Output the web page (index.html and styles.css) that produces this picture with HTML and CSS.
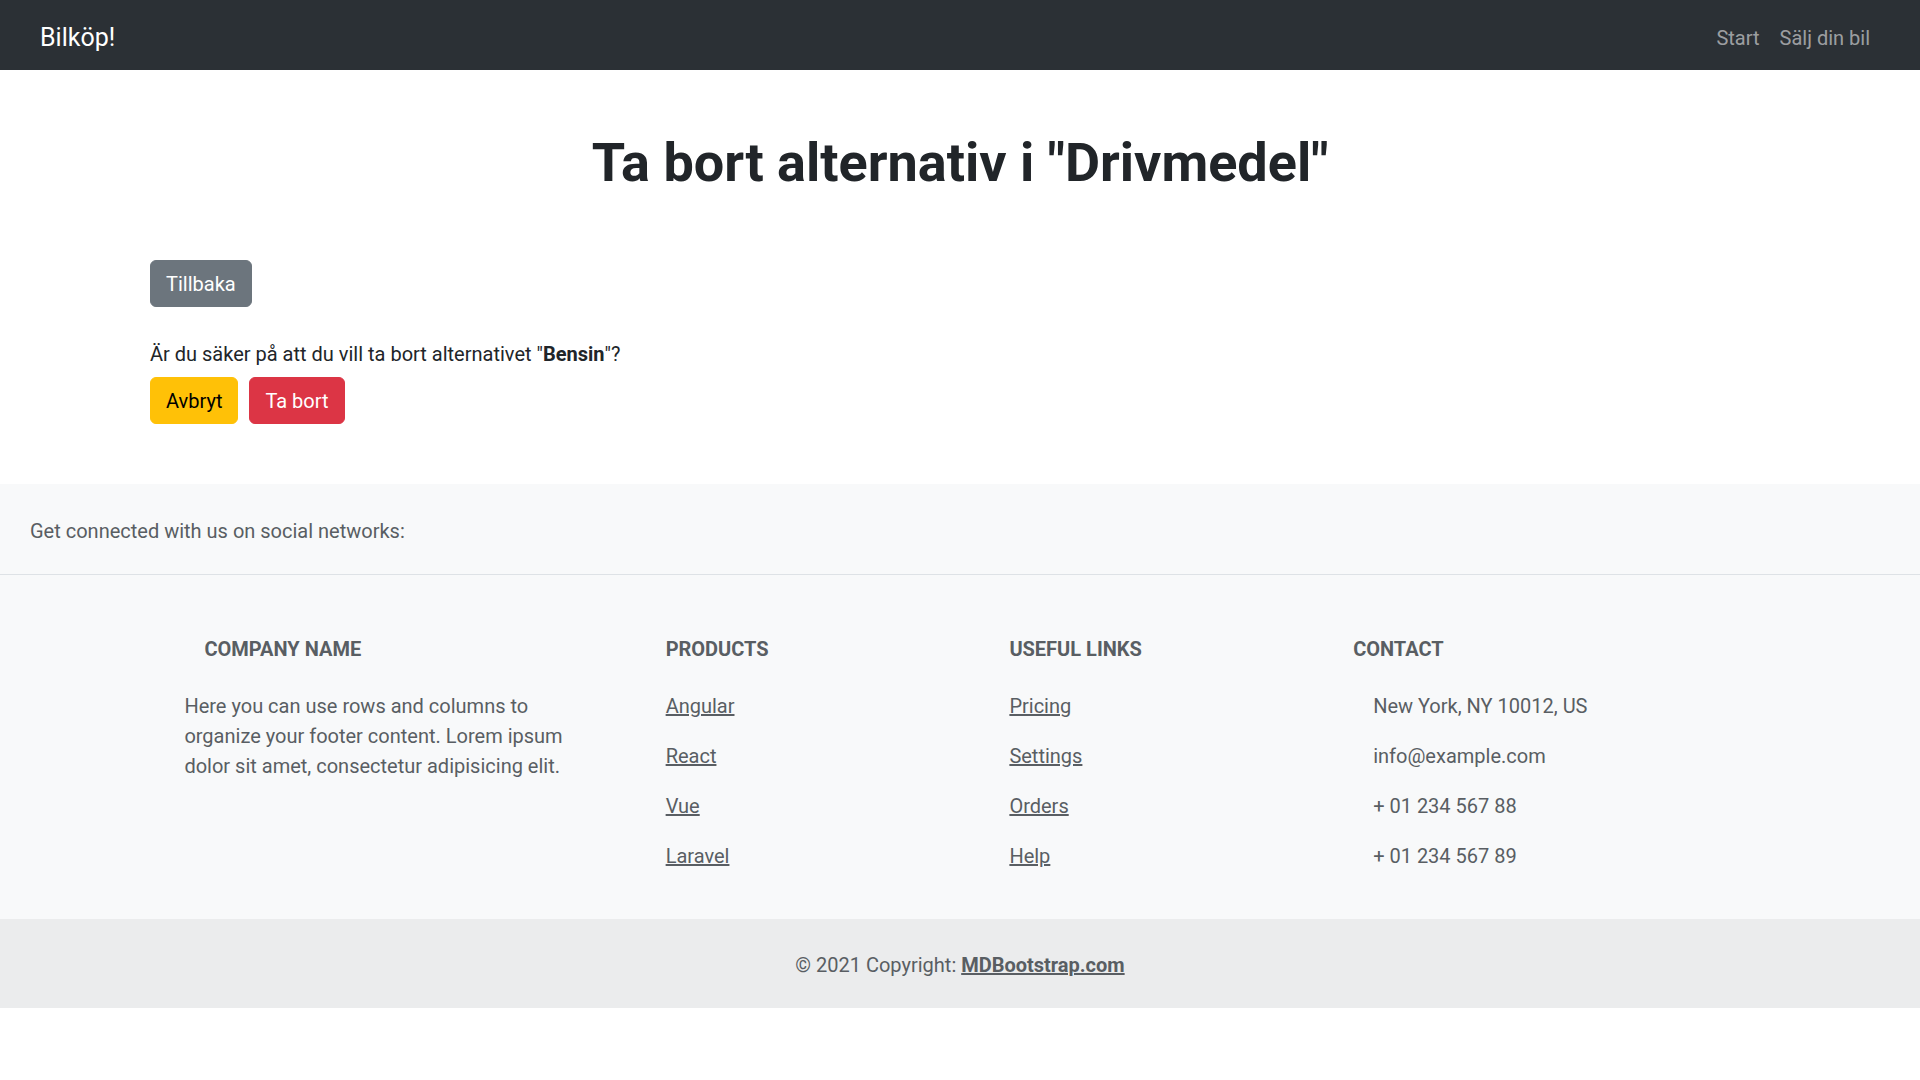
FILE: index.html
```html
<!DOCTYPE html>
<html lang="sv">
<head>
<meta charset="utf-8">
<title>Bilköp!</title>
<link rel="stylesheet" href="styles.css">
</head>
<body>
<nav class="navbar">
  <a class="brand" href="#">Bilköp!</a>
  <ul class="nav">
    <li><a class="nav-link" href="#">Start</a></li>
    <li><a class="nav-link" href="#">Sälj din bil</a></li>
  </ul>
</nav>
<main class="main">
  <h1 class="title">Ta bort alternativ i "Drivmedel"</h1>
  <div class="back-row"><a class="btn btn-secondary" href="#">Tillbaka</a></div>
  <p class="question">Är du säker på att du vill ta bort alternativet "<strong>Bensin</strong>"?</p>
  <div class="actions">
    <a class="btn btn-warning" href="#">Avbryt</a>
    <a class="btn btn-danger" href="#">Ta bort</a>
  </div>
</main>
<footer class="footer">
  <section class="social">
    <span>Get connected with us on social networks:</span>
  </section>
  <section class="footer-main">
    <div class="cols">
      <div class="col col-wide">
        <h6 class="col-title indent">Company name</h6>
        <p class="about">Here you can use rows and columns to organize your footer content. Lorem ipsum dolor sit amet, consectetur adipisicing elit.</p>
      </div>
      <div class="col col-narrow">
        <h6 class="col-title">Products</h6>
        <p><a class="link" href="#">Angular</a></p>
        <p><a class="link" href="#">React</a></p>
        <p><a class="link" href="#">Vue</a></p>
        <p><a class="link" href="#">Laravel</a></p>
      </div>
      <div class="col col-narrow">
        <h6 class="col-title">Useful links</h6>
        <p><a class="link" href="#">Pricing</a></p>
        <p><a class="link" href="#">Settings</a></p>
        <p><a class="link" href="#">Orders</a></p>
        <p><a class="link" href="#">Help</a></p>
      </div>
      <div class="col col-wide">
        <h6 class="col-title">Contact</h6>
        <p class="indent">New York, NY 10012, US</p>
        <p class="indent">info@example.com</p>
        <p class="indent">+ 01 234 567 88</p>
        <p class="indent">+ 01 234 567 89</p>
      </div>
    </div>
  </section>
  <div class="copyright">© 2021 Copyright: <a class="copy-link" href="#">MDBootstrap.com</a></div>
</footer>
</body>
</html>
```

FILE: styles.css
```css
*, *::before, *::after { box-sizing: border-box; }

html, body { margin: 0; padding: 0; }

body {
  font-family: Roboto, "Noto Sans", "Liberation Sans", sans-serif;
  font-size: 20px;
  line-height: 30px;
  color: #212529;
  background: #fff;
}

/* Navbar */
.navbar {
  height: 70px;
  background: #2b3035;
  display: flex;
  align-items: center;
  justify-content: space-between;
  padding: 5px 40px 0;
}
.brand {
  color: #fff;
  font-size: 25px;
  line-height: 37px;
  text-decoration: none;
}
.nav {
  list-style: none;
  margin: 0;
  padding: 0;
  display: flex;
}
.nav-link {
  display: block;
  padding: 10px;
  color: rgba(255, 255, 255, 0.55);
  text-decoration: none;
}

/* Main */
.main {
  width: 1650px;
  margin: 0 auto;
  padding: 61px 15px 60px;
}
.title {
  margin: 0 0 64px;
  font-size: 54px;
  line-height: 1.2;
  font-weight: 700;
  text-align: center;
  color: #212529;
}
.btn {
  display: inline-block;
  padding: 8.5px 15px 6.5px;
  border: 1px solid transparent;
  border-radius: 6px;
  font-size: 20px;
  line-height: 30px;
  text-decoration: none;
}
.btn-secondary { background: #6c757d; border-color: #6c757d; color: #fff; }
.btn-warning { background: #ffc107; border-color: #ffc107; color: #000; }
.btn-danger { background: #dc3545; border-color: #dc3545; color: #fff; }

.question {
  margin: 32px 0 8px;
}
.question strong { font-weight: 700; }
.actions {
  display: flex;
  gap: 11px;
}

/* Footer */
.footer {
  background: #f8f9fa;
  color: #595e63;
}
.social {
  padding: 32px 30px 28px;
  border-bottom: 1px solid #dee2e6;
}
.footer-main {
  padding: 62px 0 28px;
}
.cols {
  width: 1650px;
  margin: 0 auto;
  display: flex;
  justify-content: space-around;
  align-items: flex-start;
}
.col { padding: 0 15px; }
.col-wide { width: 412.5px; }
.col-narrow { width: 275px; }
.col-title {
  margin: 0 0 30px;
  font-size: 20px;
  line-height: 24px;
  font-weight: 700;
  text-transform: uppercase;
}
.col p { margin: 0 0 20px; }
.indent { padding-left: 20px; }
.link { color: inherit; text-decoration: underline; }

.copyright {
  background: rgba(0, 0, 0, 0.05);
  padding: 31px 30px 28px;
  text-align: center;
}
.copy-link {
  color: inherit;
  font-weight: 700;
  text-decoration: underline;
}
```
